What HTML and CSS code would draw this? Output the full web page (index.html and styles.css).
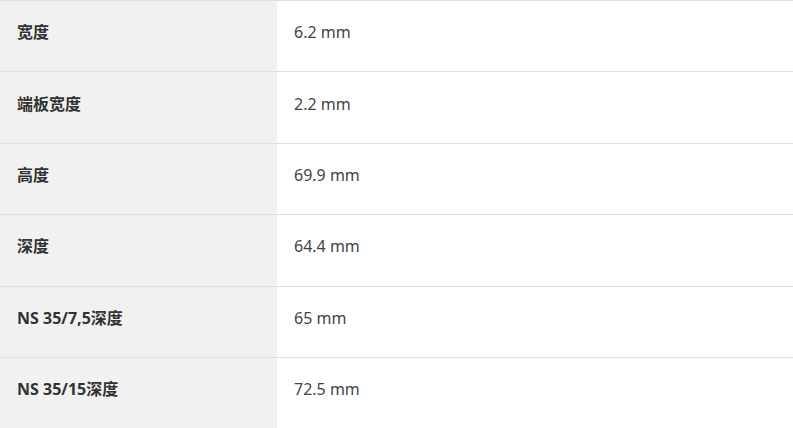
FILE: index.html
```html
<!DOCTYPE html>
<html lang="zh">
<head>
<meta charset="utf-8">
<link rel="stylesheet" href="styles.css">
</head>
<body>
<table class="spec">
  <tbody>
    <tr><th>宽度</th><td>6.2 mm</td></tr>
    <tr><th>端板宽度</th><td>2.2 mm</td></tr>
    <tr><th>高度</th><td>69.9 mm</td></tr>
    <tr><th>深度</th><td>64.4 mm</td></tr>
    <tr><th>NS 35/7,5深度</th><td>65 mm</td></tr>
    <tr><th>NS 35/15深度</th><td>72.5 mm</td></tr>
  </tbody>
</table>
</body>
</html>
```
FILE: styles.css
```css
html, body {
  margin: 0;
  padding: 0;
  background: #fff;
}
.spec {
  width: 100%;
  border-collapse: collapse;
  font-family: "Noto Sans", "Noto Sans CJK SC", sans-serif;
  font-size: 16px;
  line-height: 20px;
}
.spec tr {
  height: 71.4px;
  border-top: 1px solid #e0e0e2;
}
.spec th {
  width: 277px;
  box-sizing: border-box;
  background: #f1f1f1;
  text-align: left;
  font-weight: 700;
  color: #333;
  padding: 0 17px 8px;
  vertical-align: middle;
}
.spec td {
  color: #444;
  padding: 0 17px 8px;
  vertical-align: middle;
}
```
